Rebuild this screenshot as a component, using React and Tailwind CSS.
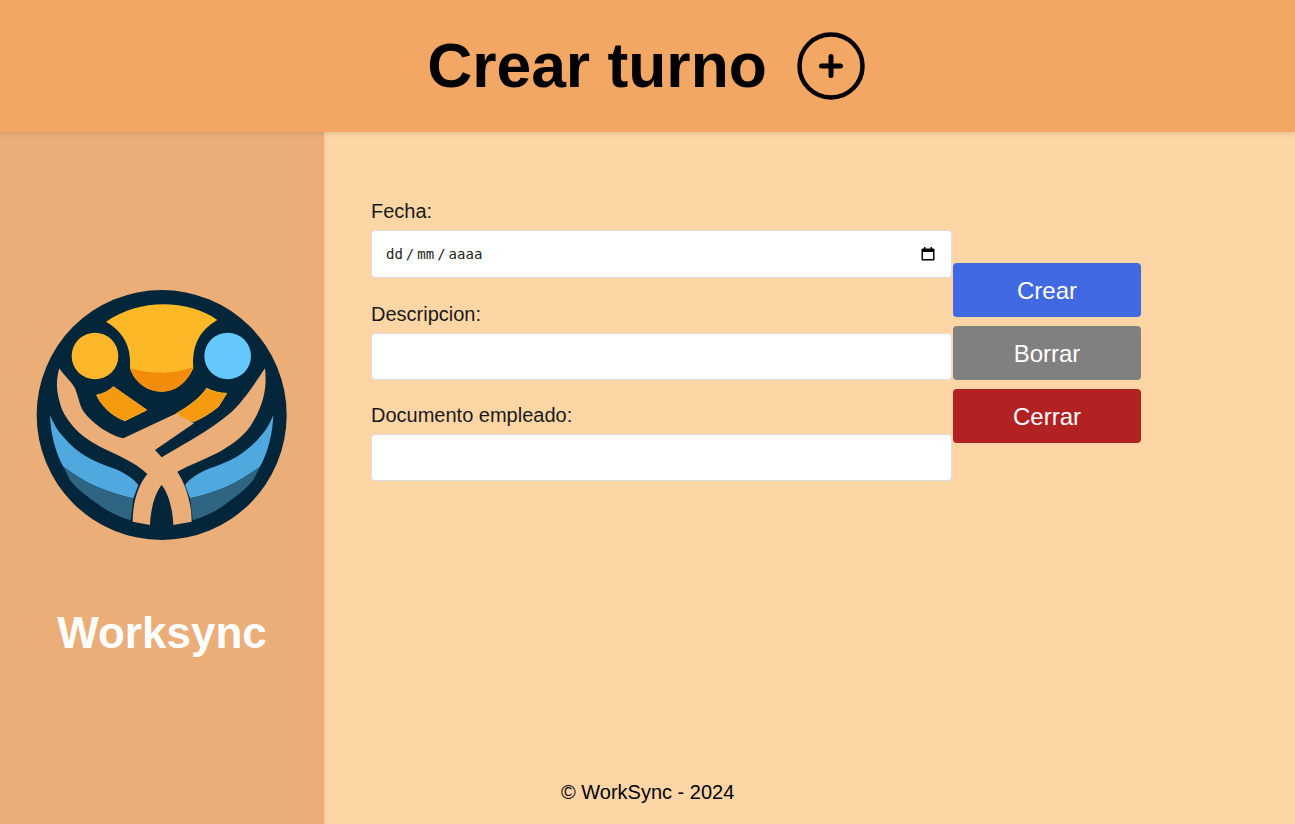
const Logo = () => (
  <svg viewBox="0 0 855 855" className="w-[285px] h-[285px] block">
    <circle cx="425" cy="420" r="375" fill="#03263a" />
    {/* lower blue lenses */}
    <path d="M90 420C100 445 112 468 130 485C150 510 175 530 200 545C225 560 255 570 280 580C310 592 340 610 355 630L340 670C305 662 265 650 230 635C195 620 165 600 130 575C105 530 92 475 90 420Z" fill="#4fa9de" />
    <path d="M130 575C165 600 195 620 230 635C265 650 305 662 340 670L332 736C295 725 260 708 230 685C195 660 170 640 150 615Z" fill="#2f6583" />
    <path d="M760 420C750 445 738 468 720 485C700 510 675 530 650 545C625 560 595 570 570 580C540 592 510 610 495 630L510 670C545 662 585 650 620 635C655 620 685 600 720 575C745 530 758 475 760 420Z" fill="#4fa9de" />
    <path d="M720 575C685 600 655 620 620 635C585 650 545 662 510 670L518 736C555 725 590 708 620 685C655 660 680 640 700 615Z" fill="#2f6583" />
    {/* arms */}
    <path d="M118 280C130 300 155 320 165 340C175 365 178 385 185 400C200 430 260 480 310 490L470 415L522 445L405 525L425 547L530 485C565 465 600 440 630 415C665 385 705 325 735 280C742 340 730 395 690 455C660 495 625 515 590 535C550 555 510 570 472 590C495 625 515 680 515 740L460 750C458 700 445 655 425 630C405 655 392 700 390 750L338 740C338 680 355 630 382 597C345 560 290 540 240 515C205 495 180 478 160 455C135 425 125 405 120 385C108 345 108 315 118 280Z" fill="#ebae78" />
    {/* sun */}
    <path d="M258 140C310 105 370 88 430 88C490 88 550 105 592 135C540 165 515 210 520 280C500 325 465 350 425 350C385 350 345 325 330 280C335 215 310 170 258 140Z" fill="#fdb827" />
    <path d="M330 280C390 298 465 298 520 275C500 325 465 350 425 350C385 350 345 325 330 280Z" fill="#f28c0a" />
    {/* wedges */}
    <path d="M280 335L380 405L315 437C280 425 245 395 230 360C250 357 268 347 280 335Z" fill="#f59a0e" stroke="#fbb02a" strokeWidth="3" />
    <path d="M560 340C580 350 600 355 620 355L595 395C570 415 545 430 520 440C500 435 485 425 470 415C505 395 540 370 560 340Z" fill="#f59a0e" stroke="#fbb02a" strokeWidth="3" />
    {/* heads */}
    <circle cx="225" cy="243" r="70" fill="#fdb72b" />
    <circle cx="623" cy="243" r="70" fill="#66c7fb" />
  </svg>
);

const Field = ({ label, children, className }) => (
  <div className={className}>
    <label className="block text-[20px] leading-[23px] text-[#1a1a1a] mb-[7px]">{label}</label>
    {children}
  </div>
);

const boxClass = "w-full bg-white border border-[#dddddd] rounded-[4px] outline-none";

const App = () => {
  return (
    <div className="h-screen overflow-hidden flex flex-col bg-[#fed6a6] font-['Liberation_Sans',Arial,sans-serif]">
      <header className="relative z-10 h-[132px] shrink-0 bg-[#f2a764] shadow-[0_2px_4px_rgba(0,0,0,0.1)] flex items-center justify-center gap-[30px] pr-[3px]">
        <h1 className="text-[62.4px] font-bold text-black leading-none">Crear turno</h1>
        <svg viewBox="0 0 68 68" className="w-[68px] h-[68px]" fill="none" stroke="black">
          <circle cx="34" cy="34" r="31.5" strokeWidth="4.5" />
          <path d="M34 24.5V43.5M24.5 34H43.5" strokeWidth="5" strokeLinecap="round" />
        </svg>
      </header>

      <div className="flex flex-1 min-h-0">
        <aside className="w-[324px] shrink-0 bg-[#ebae78] shadow-[2px_0_4px_rgba(0,0,0,0.05)] flex flex-col items-center pt-[143px]">
          <Logo />
          <h2 className="mt-[45px] text-[44px] leading-[56px] font-bold text-white">Worksync</h2>
        </aside>

        <main className="flex-1 flex flex-col justify-between pl-[47px]">
          <div className="flex items-start pt-[68px]">
            <form className="w-[581px]">
              <Field label="Fecha:">
                <div className={`${boxClass} h-[48px] flex items-center justify-between pl-[14px] pr-[15px]`}>
                  <div className="flex gap-[3px] text-[14px] text-[#222222] font-['DejaVu_Sans_Mono',monospace]">
                    <span>dd</span>
                    <span>/</span>
                    <span>mm</span>
                    <span>/</span>
                    <span>aaaa</span>
                  </div>
                  <svg viewBox="0 0 16 16" className="w-[16px] h-[16px]">
                    <path d="M4 1h1.5v1.5h5V1H12v1.5h1.5A1 1 0 0 1 14.5 3.5v10a1 1 0 0 1-1 1h-11a1 1 0 0 1-1-1v-10a1 1 0 0 1 1-1H4zM3 6v7h10V6z" fill="black" />
                  </svg>
                </div>
              </Field>
              <Field label="Descripcion:" className="mt-[25px]">
                <input type="text" className={`${boxClass} h-[47px] block`} />
              </Field>
              <Field label="Documento empleado:" className="mt-[24px]">
                <input type="text" className={`${boxClass} h-[47px] block`} />
              </Field>
            </form>

            <div className="w-[188px] ml-px mt-[63px] flex flex-col gap-[9px]">
              <button className="h-[54px] pt-px rounded-[4px] bg-[#4169e1] text-white text-[24px]">Crear</button>
              <button className="h-[54px] pt-px rounded-[4px] bg-[#808080] text-white text-[24px]">Borrar</button>
              <button className="h-[54px] pt-px rounded-[4px] bg-[#b22222] text-white text-[24px]">Cerrar</button>
            </div>
          </div>

          <footer className="ml-[190px] mb-[20px] text-[20px] leading-[23px] text-black">© WorkSync - 2024</footer>
        </main>
      </div>
    </div>
  );
};

export default App;
